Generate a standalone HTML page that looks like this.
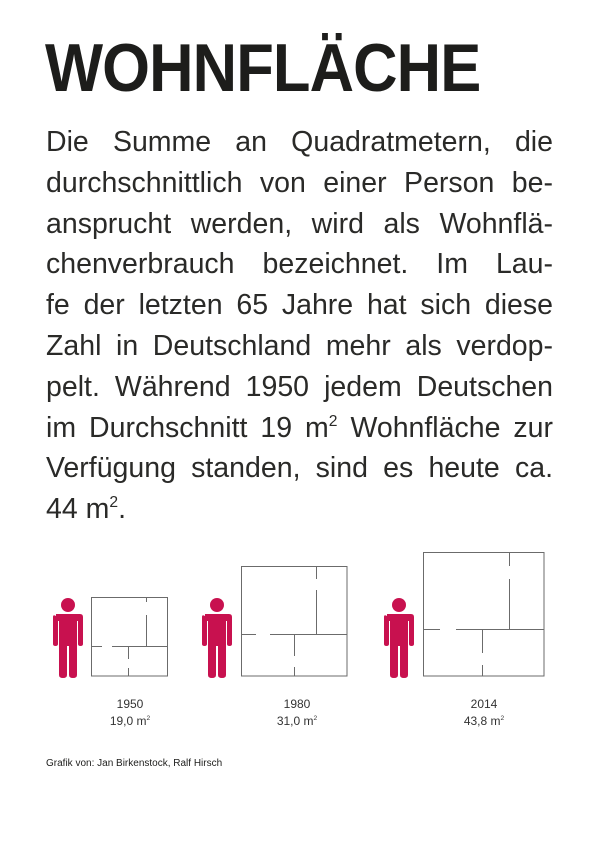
<!DOCTYPE html>
<html><head><meta charset="utf-8"><style>
html,body{margin:0;padding:0;background:#fff;}
body{width:601px;height:841px;position:relative;overflow:hidden;font-family:"Liberation Sans",sans-serif;color:#1d1d1b;}
.title{position:absolute;left:45px;top:34px;font-size:68px;line-height:68px;font-weight:bold;letter-spacing:-1px;white-space:nowrap;transform:scaleX(0.905);transform-origin:0 0;}
.body{position:absolute;left:46px;top:122px;width:507px;font-size:28.5px;line-height:40.8px;color:#2a2a28;}
.body div{text-align:justify;text-align-last:justify;white-space:nowrap;}
.body div.l{text-align-last:left;}
sup{font-size:0.55em;vertical-align:0;position:relative;top:-0.7em;line-height:0;}
.lab{position:absolute;font-size:12px;line-height:17px;text-align:center;width:100px;color:#333;}
.cr{position:absolute;left:46px;top:758px;font-size:10px;}
</style></head><body>
<div class="title">WOHNFLÄCHE</div>
<div class="body">
<div>Die Summe an Quadratmetern, die</div>
<div>durchschnittlich von einer Person be-</div>
<div>ansprucht werden, wird als Wohnflä-</div>
<div>chenverbrauch bezeichnet. Im Lau-</div>
<div>fe der letzten 65 Jahre hat sich diese</div>
<div>Zahl in Deutschland mehr als verdop-</div>
<div>pelt. Während 1950 jedem Deutschen</div>
<div>im Durchschnitt 19 m<sup>2</sup> Wohnfläche zur</div>
<div>Verfügung standen, sind es heute ca.</div>
<div class="l">44 m<sup>2</sup>.</div>
</div>
<svg width="601" height="841" style="position:absolute;left:0;top:0" xmlns="http://www.w3.org/2000/svg">
<defs>
<g id="p" fill="#c8114f">
<circle cx="0" cy="0" r="7"/>
<path d="M-12,11 Q-15,9 -15,12 V39 Q-15,41 -12.5,41 Q-10,41 -10,39 V16 H-9 V70 Q-9,73 -5,73 Q-1,73 -1,70 V41 H1 V70 Q1,73 5,73 Q9,73 9,70 V16 H10 V39 Q10,41 12.5,41 Q15,41 15,39 V12 Q15,9 12,9 H-12 Z"/>
</g>
</defs>
<use href="#p" x="68" y="605"/>
<use href="#p" x="217" y="605"/>
<use href="#p" x="399" y="605"/>
<g fill="none" stroke="#6b6b6b" stroke-width="1">
<rect x="91.5" y="597.5" width="76" height="78.5"/>
<path d="M91.5 646.5H102M112 646.5H168M146.5 597.5V602M146.5 615V646.5M128.5 646.5V659M128.5 668V676"/>
<rect x="241.5" y="566.5" width="105.5" height="109.5"/>
<path d="M241.5 634.5H256M270 634.5H347M316.5 566.5V579M316.5 590V634.5M294.5 634.5V656M294.5 667V676"/>
<rect x="423.5" y="552.5" width="120.5" height="123.5"/>
<path d="M423.5 629.5H440M456 629.5H544M509.5 552.5V566M509.5 579V629.5M482.5 629.5V653M482.5 665V676"/>
</g>
</svg>
<div class="lab" style="left:80px;top:696px">1950<br>19,0 m<sup>2</sup></div>
<div class="lab" style="left:247px;top:696px">1980<br>31,0 m<sup>2</sup></div>
<div class="lab" style="left:434px;top:696px">2014<br>43,8 m<sup>2</sup></div>
<div class="cr">Grafik von: Jan Birkenstock, Ralf Hirsch</div>
</body></html>
